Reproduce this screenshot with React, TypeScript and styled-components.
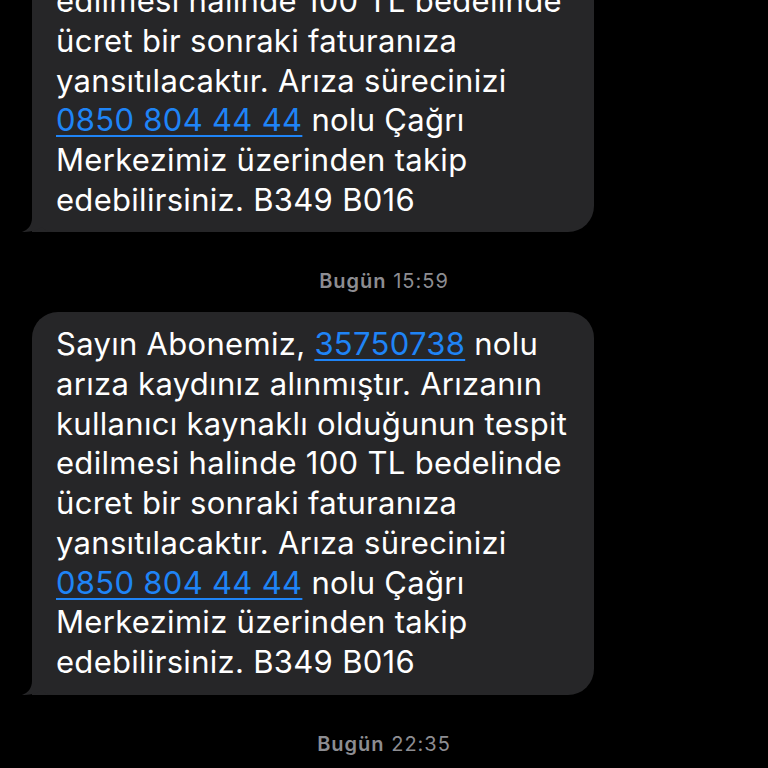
import * as React from 'react';
import styled, { createGlobalStyle } from 'styled-components';

const GlobalStyle = createGlobalStyle`
	html, body {
		margin: 0;
		padding: 0;
		background: #000;
	}
	body {
		font-family: Inter, 'Noto Sans', 'Liberation Sans', sans-serif;
		-webkit-font-smoothing: antialiased;
	}
`;

const SScreen = styled.div`
	width: 768px;
	height: 768px;
	overflow: hidden;
	background: #000;
`;

// the thread is scrolled: the first bubble starts above the top edge
const SThread = styled.div`
	display: flex;
	flex-direction: column;
	margin-top: -150px;
`;

const SStamp = styled.div`
	margin: 37px 0 19px;
	text-align: center;
	font-size: 20px;
	line-height: 24px;
	color: #8d8d92;
	letter-spacing: 1px;
`;

const SDay = styled.span`
	font-weight: 600;
`;

const SRow = styled.div`
	display: flex;
	padding-left: 32px;
`;

const SBubble = styled.div`
	position: relative;
	width: 562px;
	box-sizing: border-box;
	padding: 12px 24px 13px;
	background: #262628;
	border-radius: 26px 26px 26px 0;
	color: #fff;
	font-size: 31px;
	line-height: 39.7px;
	letter-spacing: 0.3px;
`;

const SLine = styled.div`
	white-space: nowrap;
`;

const SLink = styled.span`
	color: #1f84f6;
	text-decoration: underline;
	text-decoration-thickness: 2px;
	text-underline-offset: 4px;
`;

const STail = styled.svg`
	position: absolute;
	left: -10px;
	bottom: 0;
	width: 34px;
	height: 22px;
`;

const Tail = () => (
	<STail viewBox='0 0 34 22'>
		<path
			d='M10 0 L10 8 C10 15 6 20 0 22 C7 22 14 21 20 17 C23 21 27 22 34 22 L34 0 Z'
			fill='#262628'
		/>
	</STail>
);

interface IMessageProps {
	record: string;
	phone: string;
}

const Message = ({ record, phone }: IMessageProps) => (
	<SRow>
		<SBubble>
			<SLine>
				Sayın Abonemiz, <SLink>{record}</SLink> nolu
			</SLine>
			<SLine>arıza kaydınız alınmıştır. Arızanın</SLine>
			<SLine>kullanıcı kaynaklı olduğunun tespit</SLine>
			<SLine>edilmesi halinde 100 TL bedelinde</SLine>
			<SLine>ücret bir sonraki faturanıza</SLine>
			<SLine>yansıtılacaktır. Arıza sürecinizi</SLine>
			<SLine>
				<SLink>{phone}</SLink> nolu Çağrı
			</SLine>
			<SLine>Merkezimiz üzerinden takip</SLine>
			<SLine>edebilirsiniz. B349 B016</SLine>
			<Tail />
		</SBubble>
	</SRow>
);

const Stamp = ({ time }: { time: string }) => (
	<SStamp>
		<SDay>Bugün</SDay> {time}
	</SStamp>
);

const App = () => {
	return (
		<SScreen>
			<GlobalStyle />
			<SThread>
				<Message record='35750738' phone='0850 804 44 44' />
				<Stamp time='15:59' />
				<Message record='35750738' phone='0850 804 44 44' />
				<Stamp time='22:35' />
			</SThread>
		</SScreen>
	);
};

export default App;
